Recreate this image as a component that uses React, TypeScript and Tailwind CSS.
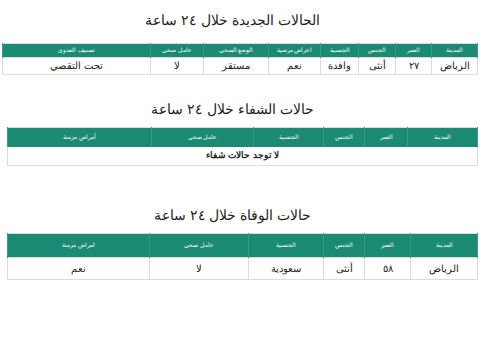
const newCols = [
  { label: "المدينة", w: "w-[46px]", v: "الرياض" },
  { label: "العمر", w: "w-[36px]", v: "٢٧" },
  { label: "الجنس", w: "w-[37px]", v: "أنثى" },
  { label: "الجنسية", w: "w-[38px]", v: "وافدة" },
  { label: "اعراض مرضية", w: "w-[52px]", v: "نعم" },
  { label: "الوضع الصحي", w: "w-[65px]", v: "مستقر" },
  { label: "عامل صحي", w: "w-[53px]", v: "لا" },
  { label: "تصنيف العدوى", w: "", v: "تحت التقصي" },
];

const recCols = [
  { label: "المدينة", w: "w-[70px]" },
  { label: "العمر", w: "w-[43px]" },
  { label: "الجنس", w: "w-[41px]" },
  { label: "الجنسية", w: "w-[70px]" },
  { label: "عامل صحي", w: "w-[102px]" },
  { label: "أمراض مزمنة", w: "" },
];

const deathCols = [
  { label: "المدينة", w: "w-[67px]", v: "الرياض" },
  { label: "العمر", w: "w-[46px]", v: "٥٨" },
  { label: "الجنس", w: "w-[41px]", v: "أنثى" },
  { label: "الجنسية", w: "w-[75px]", v: "سعودية" },
  { label: "عامل صحي", w: "w-[99px]", v: "لا" },
  { label: "امراض مزمنة", w: "", v: "نعم" },
];

function Title({ text, className }: { text: string; className: string }) {
  return (
    <h2 className={"text-center text-[14px] leading-[22px] text-[#222] pl-0 pr-[18px] " + className}>
      {text}
    </h2>
  );
}

export default function App() {
  return (
    <div
      dir="rtl"
      className="w-[483px] h-[363px] bg-white overflow-hidden"
      style={{ fontFamily: '"Liberation Sans", Arial, sans-serif' }}
    >
      <Title text="الحالات الجديدة خلال ٢٤ ساعة" className="pt-[9px]" />

      {/* new cases */}
      <div className="mt-[12px] mr-[5px] ml-[2px]">
        <table className="w-full table-fixed border-collapse border border-[#dcdcdc]">
          <thead>
            <tr className="bg-[#1b8a72] h-[13px]">
              {newCols.map((c) => (
                <th key={c.label} className={"text-[6px] font-normal text-white border-x border-[#3a9c86] leading-[13px] " + c.w}>
                  {c.label}
                </th>
              ))}
            </tr>
          </thead>
          <tbody>
            <tr className="h-[17px]">
              {newCols.map((c) => (
                <td key={c.label} className="text-[10px] text-[#222] text-center border border-[#dcdcdc] leading-[16px]">
                  {c.v}
                </td>
              ))}
            </tr>
          </tbody>
        </table>
      </div>

      <Title text="حالات الشفاء خلال ٢٤ ساعة" className="mt-[23px]" />

      {/* recoveries */}
      <div className="mt-[7px] mr-[5px] ml-[7px]">
        <table className="w-full table-fixed border-collapse border border-[#dcdcdc]">
          <thead>
            <tr className="bg-[#1b8a72] h-[19px]">
              {recCols.map((c) => (
                <th key={c.label} className={"text-[6px] font-normal text-white border-x border-[#3a9c86] " + c.w}>
                  {c.label}
                </th>
              ))}
            </tr>
          </thead>
          <tbody>
            <tr className="h-[19px]">
              <td colSpan={6} className="text-[9px] font-bold text-[#222] text-center">
                لا توجد حالات شفاء
              </td>
            </tr>
          </tbody>
        </table>
      </div>

      <Title text="حالات الوفاة خلال ٢٤ ساعة" className="mt-[38px]" />

      {/* deaths */}
      <div className="mt-[7px] mr-[5px] ml-[7px]">
        <table className="w-full table-fixed border-collapse border border-[#dcdcdc]">
          <thead>
            <tr className="bg-[#1b8a72] h-[24px]">
              {deathCols.map((c) => (
                <th key={c.label} className={"text-[6px] font-normal text-white border-x border-[#3a9c86] " + c.w}>
                  {c.label}
                </th>
              ))}
            </tr>
          </thead>
          <tbody>
            <tr className="h-[22px]">
              {deathCols.map((c) => (
                <td key={c.label} className="text-[10px] text-[#222] text-center border border-[#dcdcdc]">
                  {c.v}
                </td>
              ))}
            </tr>
          </tbody>
        </table>
      </div>
    </div>
  );
}
